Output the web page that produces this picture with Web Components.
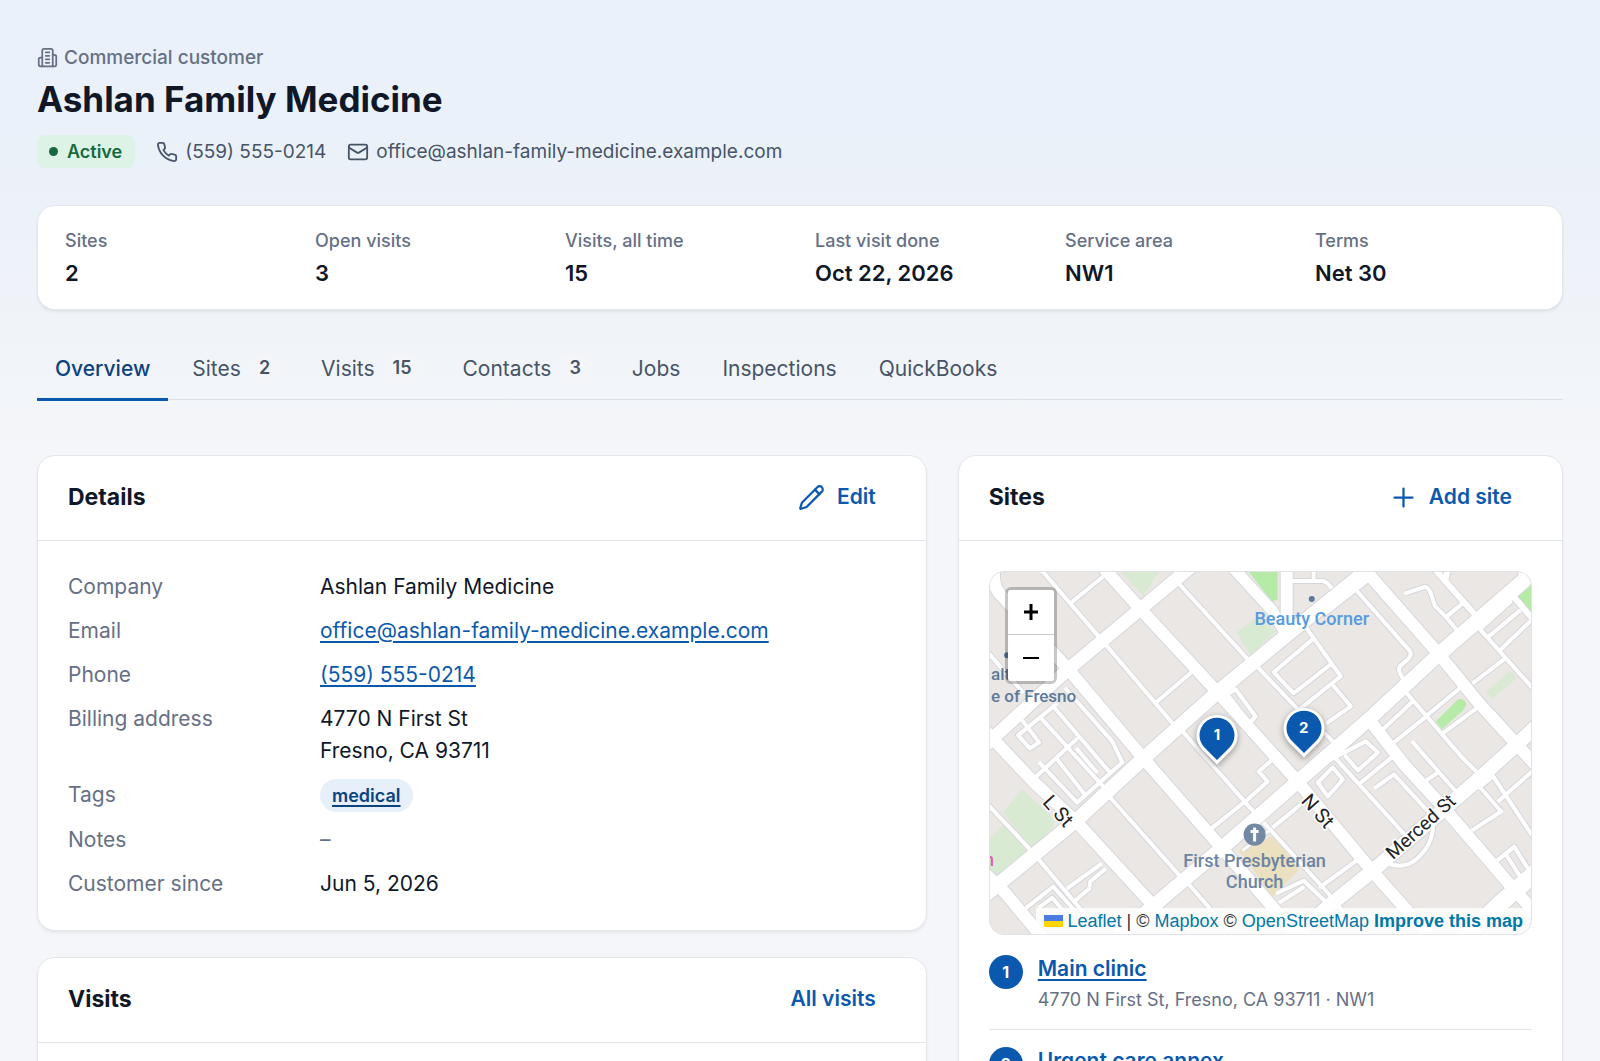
<!DOCTYPE html>
<html lang="en">
<head>
<meta charset="utf-8">
<title>Ashlan Family Medicine</title>
<style>
  html { scrollbar-width: none; }
  body {
    margin: 0;
    min-height: 100vh;
    font-family: Inter, "Liberation Sans", sans-serif;
    color: #101828;
    background: #f4f6f9 linear-gradient(#eaf1fb 0, #ebf1f9 160px, #f4f6f9 460px) no-repeat;
    --brand: #0b59ae;
    --brand-dark: #0b4380;
    --muted: #667085;
    --line: #e3e7ec;
  }
</style>
</head>
<body>
<customer-page></customer-page>

<script>
const ICONS = {
  building: '<path d="M6 22V4a2 2 0 0 1 2-2h8a2 2 0 0 1 2 2v18Z"/><path d="M6 12H4a2 2 0 0 0-2 2v6a2 2 0 0 0 2 2h2"/><path d="M18 9h2a2 2 0 0 1 2 2v9a2 2 0 0 1-2 2h-2"/><path d="M10 6h4M10 10h4M10 14h4M10 18h4"/>',
  phone: '<path d="M22 16.92v3a2 2 0 0 1-2.18 2 19.79 19.79 0 0 1-8.63-3.07 19.5 19.5 0 0 1-6-6 19.79 19.79 0 0 1-3.07-8.67A2 2 0 0 1 4.11 2h3a2 2 0 0 1 2 1.72 12.84 12.84 0 0 0 .7 2.81 2 2 0 0 1-.45 2.11L8.09 9.91a16 16 0 0 0 6 6l1.27-1.27a2 2 0 0 1 2.11-.45 12.84 12.84 0 0 0 2.81.7A2 2 0 0 1 22 16.92z"/>',
  mail: '<rect x="2" y="4" width="20" height="16" rx="2"/><path d="m22 7-8.97 5.7a1.94 1.94 0 0 1-2.06 0L2 7"/>',
  pencil: '<path d="M21.174 6.812a1 1 0 0 0-3.986-3.987L3.842 16.174a2 2 0 0 0-.5.83l-1.321 4.352a.5.5 0 0 0 .623.622l4.353-1.32a2 2 0 0 0 .83-.497z"/><path d="m15 5 4 4"/>',
  plus: '<path d="M4 12h16M12 4v16"/>'
};

function define(name, html, setup) {
  const template = document.createElement('template');
  template.innerHTML = html;
  customElements.define(name, class extends HTMLElement {
    constructor() {
      super();
      this.attachShadow({ mode: 'open' }).append(template.content.cloneNode(true));
    }
    connectedCallback() {
      if (setup && !this.ready) { this.ready = true; setup(this, this.shadowRoot); }
    }
  });
}

define('line-icon', `
  <style>
    :host { display: block; flex: none; width: 22px; height: 22px; }
    svg { display: block; width: 100%; height: 100%; fill: none; stroke: currentColor; stroke-width: 2; stroke-linecap: round; stroke-linejoin: round; }
  </style>
  <svg viewBox="0 0 24 24" aria-hidden="true"></svg>`,
  (el, root) => { root.querySelector('svg').innerHTML = ICONS[el.getAttribute('name')]; });

define('status-badge', `
  <style>
    :host { display: flex; align-items: center; gap: 9px; box-sizing: border-box; height: 33px; padding: 0 13px 0 12px; border-radius: 8px; background: #dcf3e5; color: #17693f; font-size: 18px; font-weight: 600; }
    i { width: 9px; height: 9px; border-radius: 50%; background: currentColor; }
  </style>
  <i></i><slot></slot>`);

define('customer-header', `
  <style>
    :host { display: block; }
    .kind { display: flex; align-items: center; gap: 6px; margin: 0; height: 30px; color: var(--muted); font-size: 19px; font-weight: 500; }
    .kind line-icon { width: 21px; height: 21px; }
    h1 { margin: 3px 0 12px; font-size: 35px; line-height: 48px; font-weight: 700; }
    .meta { display: flex; flex-wrap: wrap; align-items: center; gap: 21px; font-size: 19px; }
    .contact { display: flex; align-items: center; gap: 7px; color: #475467; text-decoration: none; }
  </style>
  <p class="kind"><line-icon name="building"></line-icon>Commercial customer</p>
  <h1>Ashlan Family Medicine</h1>
  <div class="meta">
    <status-badge>Active</status-badge>
    <a class="contact" href="tel:+15595550214"><line-icon name="phone"></line-icon>(559) 555-0214</a>
    <a class="contact" href="mailto:office@ashlan-family-medicine.example.com"><line-icon name="mail"></line-icon>office@ashlan-family-medicine.example.com</a>
  </div>`);

define('stat-item', `
  <style>
    :host { display: block; }
    .label { color: var(--muted); font-size: 18px; line-height: 28px; font-weight: 500; margin-bottom: 2px; }
    .value { font-size: 22px; line-height: 32px; font-weight: 600; }
  </style>
  <div class="label"></div><div class="value"><slot></slot></div>`,
  (el, root) => { root.querySelector('.label').textContent = el.getAttribute('label'); });

define('stat-strip', `
  <style>
    :host { display: grid; grid-template-columns: repeat(6, minmax(0, 1fr)); gap: 30px; padding: 21px 27px 20px; background: #fff; border: 1px solid var(--line); border-radius: 18px; box-shadow: 0 2px 3px rgba(16, 24, 40, .07); }
  </style>
  <slot></slot>`);

define('tab-link', `
  <style>
    :host { display: block; }
    a { display: flex; align-items: center; gap: 9px; height: 60px; padding: 0 18px; margin-bottom: -2px; border-bottom: 3px solid transparent; color: #475467; font-size: 21px; text-decoration: none; }
    :host([active]) a { color: var(--brand-dark); border-color: var(--brand); font-weight: 500; }
    b { padding: 0 9px; border-radius: 12px; font-size: 18px; line-height: 26px; font-weight: 600; background: #f3f5f9; }
    b:empty { display: none; }
  </style>
  <a href="#"><slot></slot><b></b></a>`,
  (el, root) => { root.querySelector('b').textContent = el.getAttribute('count') || ''; });

define('tab-bar', `
  <style>
    :host { display: flex; gap: 6px; border-bottom: 1px solid #dde1e7; }
  </style>
  <slot></slot>`);

define('text-action', `
  <style>
    :host { display: block; }
    button { display: flex; align-items: center; gap: 12px; padding: 0 20px; height: 48px; border: 0; border-radius: 9px; background: none; color: var(--brand); font: 600 21px/32px Inter, sans-serif; }
    line-icon { width: 27px; height: 27px; }
  </style>
  <button type="button"><slot></slot></button>`,
  (el, root) => {
    const name = el.getAttribute('icon');
    if (!name) return;
    const icon = document.createElement('line-icon');
    icon.setAttribute('name', name);
    root.querySelector('button').prepend(icon);
  });

define('panel-card', `
  <style>
    :host { display: block; background: #fff; border: 1px solid var(--line); border-radius: 18px; box-shadow: 0 2px 3px rgba(16, 24, 40, .06); }
    header { display: flex; align-items: center; justify-content: space-between; box-sizing: border-box; height: 85px; padding: 0 30px 2px; border-bottom: 1px solid var(--line); }
    h2 { margin: 0; font-size: 23px; line-height: 32px; font-weight: 700; }
    .body { padding: 30px; }
  </style>
  <header><h2></h2><slot name="action"></slot></header>
  <div class="body"><slot></slot></div>`,
  (el, root) => { root.querySelector('h2').textContent = el.getAttribute('heading'); });

define('tag-pill', `
  <style>
    :host { display: inline-flex; vertical-align: top; }
    a { padding: 0 12px; border-radius: 17px; background: #e6effa; color: var(--brand-dark); font-size: 18px; line-height: 33px; font-weight: 600; text-decoration-thickness: 2px; text-underline-offset: 3px; }
  </style>
  <a href="#"><slot></slot></a>`);

define('detail-list', `
  <style>
    :host { display: block; font-size: 21px; line-height: 32px; }
    dl { display: grid; grid-template-columns: 240px minmax(0, 1fr); gap: 12px; margin: 0; }
    dt { color: var(--muted); }
    dd { margin: 0; }
    dd > a { color: var(--brand); text-underline-offset: 3px; }
    .none { color: var(--muted); }
  </style>
  <dl>
    <dt>Company</dt><dd>Ashlan Family Medicine</dd>
    <dt>Email</dt><dd><a href="mailto:office@ashlan-family-medicine.example.com">office@ashlan-family-medicine.example.com</a></dd>
    <dt>Phone</dt><dd><a href="tel:+15595550214">(559) 555-0214</a></dd>
    <dt>Billing address</dt><dd>4770 N First St<br>Fresno, CA 93711</dd>
    <dt>Tags</dt><dd><tag-pill>medical</tag-pill></dd>
    <dt>Notes</dt><dd class="none">–</dd>
    <dt>Customer since</dt><dd>Jun 5, 2026</dd>
  </dl>`);

define('map-pin', `
  <style>
    :host { display: block; position: absolute; width: 42px; height: 42px; margin: -21px 0 0 -21px; }
    svg { position: absolute; inset: 0; width: 42px; height: 51px; overflow: visible; filter: drop-shadow(0 2px 3px rgba(0, 0, 0, .35)); }
    span { position: relative; display: block; text-align: center; color: #fff; font-size: 15px; line-height: 41px; font-weight: 700; }
  </style>
  <svg viewBox="0 0 42 51" aria-hidden="true"><path d="M6 35.5A20.5 20.5 0 1 1 36 35.5L21 50.5Z" fill="#fff"/><path d="M8.5 33.5A17.5 17.5 0 1 1 33.5 33.5L21 46Z" fill="#0b59ae"/></svg>
  <span><slot></slot></span>`);

/* Street network in map canvas units; each entry is [stroke width, path data]. */
const STREETS = [
  [13, 'M1195 564L1140 610 1068 670 985 746'],
  [14, 'M1375 564L1280 641 1217 693 1143 759 1077 820 1000 883 980 900'],
  [14, 'M1438 655L1368 720 1297 782 1223 847 1153 906 1120 934'],
  [15, 'M1438 655L1521 583 Q1529 577 1522 566'],
  [14, 'M1540 722L1518 743 1477 780 1373 870 1327 907 1295 936'],
  [17, 'M1540 868L1500 903 1465 936'],
  [12, 'M994 566V578Q994 590 1002 597L1068 670 1143 759 1220 847 1290 928'],
  [12, 'M1099 564L1140 610 1217 693 1297 782 1370 870 1425 932'],
  [11, 'M1230 566L1272 612 1284 633'],
  [12, 'M1286 566V634'],
  [12, 'M1358 564L1438 655 1477 703 1520 750 1540 772'],
  [12, 'M1368 720L1403 765 1447 813 1513 890 1545 925'],
  [12, 'M984 730L1033 782 1077 823 1153 906 1175 934'],
  [12, 'M984 873L1005 893 1040 935'],
  [6, 'M1430 566L1475 617M1448 566L1444 582'],
  [6, 'M1510 595L1535 624'],
  [4, 'M1043 573L1105 645 1173 725M1073 602L1106 575'],
  [4, 'M1177 583L1247 660M1157 702L1190 674'],
  [4, 'M1257 668L1300 713M1227 695L1235 690 1255 717 1249 724 1228 697'],
  [4, 'M1183 733L1253 812M1212 828L1247 800 1267 782 1258 772 1272 760'],
  [4, 'M985 650L1022 692M1023 722L1039 743 1030 749 1018 736 1056 705'],
  [4, 'M1042 720L1103 787M1053 707L1108 771M1066 690L1112 742 1122 763 1077 803 1040 764'],
  [4, 'M1036 777L1076 740M1057 760L1083 793M1077 750L1096 772'],
  [4, 'M1110 798L1180 877M1187 883L1228 930'],
  [4, 'M985 802L1032 852 1085 915'],
  [4, 'M1068 888L1100 865M1076 900L1089 889 1090 882 1104 870M1025 909L1053 887 1073 909M1040 907L1052 898 1064 912'],
  [3, 'M1243 850L1270 830M1262 818L1245 832'],
  [4, 'M1293 582H1322Q1327 583 1330 588M1313 572V582'],
  [4, 'M1325 614L1366 582M1357 593L1409 652Q1411 656 1407 660L1399 667Q1396 671 1402 679'],
  [4, 'M1305 628L1340 677 1295 713M1312 640L1273 673 1293 694 1330 665'],
  [4, 'M1333 687L1350 707 1327 723M1320 730L1334 744'],
  [4, 'M1405 594L1423 588Q1427 587 1430 595L1434 607 1445 618 1459 635M1445 618L1463 603'],
  [4, 'M1477 628L1535 693M1473 683L1503 660M1488 637L1518 612M1500 650L1528 623'],
  [4, 'M1481 628L1509 603M1405 693L1460 757 1474 771M1425 717L1460 688M1443 733L1478 707'],
  [4, 'M1383 729L1412 702M1393 743L1423 719M1412 743L1453 790M1427 780L1437 773'],
  [4, 'M1330 760L1365 742 1377 753 1357 771 1345 757M1317 783L1332 768 1342 780 1327 797Z'],
  [4, 'M1333 757L1402 833M1360 783L1392 757M1375 788L1393 775 1430 815'],
  [4, 'M1432 826Q1432 845 1415 860 1401 871 1383 862'],
  [4, 'M1273 827L1300 805M1264 824L1327 893 1345 915M1320 887L1357 860M1277 893L1303 881 1330 907M1280 902L1302 888'],
  [4, 'M1472 830L1500 812M1498 801L1532 771M1478 788L1492 777 1535 842M1480 789L1500 812'],
  [4, 'M1497 860L1513 847 1528 871 1519 877 1505 855']
];

define('site-map', `
  <style>
    :host { display: block; position: relative; aspect-ratio: 542 / 363; overflow: hidden; box-sizing: border-box; border: 1px solid #dfe3e8; border-radius: 15px; background: #eae7e4; }
    .canvas { display: block; width: 100%; height: 100%; font-family: Roboto, sans-serif; font-size: 18px; font-weight: 500; }
    .halo { paint-order: stroke; stroke: #fff; stroke-width: 3px; stroke-linejoin: round; }
    .zoom { position: absolute; left: 15px; top: 15px; border: 3px solid rgba(0, 0, 0, .22); border-radius: 6px; background-clip: padding-box; }
    .zoom button { display: block; width: 46px; height: 46px; padding: 0; border: 0; background: #fff; color: #000; }
    .zoom button:first-child { height: 45px; border-bottom: 1px solid #ccc; box-sizing: border-box; border-radius: 3px 3px 0 0; }
    .zoom button:last-child { border-radius: 0 0 3px 3px; }
    .zoom svg { display: block; margin: auto; }
    .credit { position: absolute; right: 0; bottom: 0; display: flex; align-items: center; gap: 5px; height: 26px; padding: 0 8px; background: rgba(255, 255, 255, .82); color: #333; font: 18px/26px "Liberation Sans", sans-serif; white-space: pre; }
    .credit a { color: #0078a8; text-decoration: none; }
    .one { left: 42%; top: 45%; }
    .two { left: 58%; top: 43%; }
  </style>
  <svg class="canvas" viewBox="990 573 540 361" preserveAspectRatio="xMidYMid slice" aria-label="Map of sites">
    <g fill="#d9ead3">
      <path d="M1118 570H1160L1143 597Z"/><path d="M1236 633L1257 618 1275 632 1250 656Z"/>
      <path d="M1022 790L1003 813 1032 850 1054 826 1052 818Z"/><path d="M1003 825L1028 850 997 876 985 870V845Z"/>
      <path d="M1485 693L1508 672Q1516 676 1514 680L1491 700Z"/>
    </g>
    <g fill="#b5eba6">
      <path d="M1246 570H1277V601L1271 602Z"/><path d="M1535 580L1516 597 1535 618Z"/>
      <path d="M1435 722L1457 700Q1464 698 1465 706L1462 711 1441 730Z"/>
    </g>
    <path fill="#ebe0c0" d="M1238 850L1274 836 1298 870 1272 897Z"/>
    <g class="casing" fill="none" stroke="#d6d7dd" stroke-linejoin="round"></g>
    <g class="surface" fill="none" stroke="#fff" stroke-linejoin="round" stroke-linecap="round"></g>
    <g fill="#5b7a9b">
      <circle cx="1007" cy="656" r="3"/><circle cx="1311" cy="600" r="3"/>
      <text x="991" y="681" font-size="17">alth</text><text x="991" y="703" font-size="17">e of Fresno</text>
    </g>
    <text x="1311" y="626" text-anchor="middle" fill="#579be0">Beauty Corner</text>
    <text x="984" y="866" fill="#d75fb4">n</text>
    <g fill="#222" font-weight="400" font-size="20" text-anchor="middle">
      <text class="halo" transform="translate(1053 816) rotate(48)">L St</text>
      <text class="halo" transform="translate(1312 816) rotate(48)">N St</text>
      <text class="halo" transform="translate(1424 832) rotate(-42)" font-size="19">Merced St</text>
    </g>
    <circle cx="1254" cy="835" r="11" fill="#7389a3"/>
    <path d="M1254 828V842M1250 832H1258" stroke="#fff" stroke-width="3"/>
    <g fill="#6b84a3" text-anchor="middle"><text x="1254" y="867">First Presbyterian</text><text x="1254" y="888">Church</text></g>
  </svg>
  <map-pin class="one">1</map-pin>
  <map-pin class="two">2</map-pin>
  <div class="zoom">
    <button type="button" aria-label="Zoom in"><svg width="16" height="18" viewBox="0 0 16 18"><path d="M1 9H15M8 1V17" stroke="#000" stroke-width="3"/></svg></button>
    <button type="button" aria-label="Zoom out"><svg width="16" height="18" viewBox="0 0 16 18"><path d="M0 9H16" stroke="#000" stroke-width="2"/></svg></button>
  </div>
  <div class="credit"><svg width="19" height="12" viewBox="0 0 19 12" aria-hidden="true"><path fill="#4c7be1" d="M0 0h19v6H0z"/><path fill="#ffd500" d="M0 6h19v6H0z"/></svg><span><a href="#">Leaflet</a> | © <a href="#">Mapbox</a> © <a href="#">OpenStreetMap</a> <a href="#"><b>Improve this map</b></a></span></div>`,
  (el, root) => {
    root.querySelector('.casing').innerHTML = STREETS.map(([w, d]) => `<path d="${d}" stroke-width="${w + 2}"/>`).join('');
    root.querySelector('.surface').innerHTML = STREETS.map(([w, d]) => `<path d="${d}" stroke-width="${w}"/>`).join('');
  });

define('site-item', `
  <style>
    :host { display: flex; gap: 15px; padding: 15px 0 14px; }
    :host(:not(:last-child)) { border-bottom: 1px solid var(--line); }
    .number { flex: none; width: 34px; height: 34px; margin-top: 2px; border-radius: 50%; background: var(--brand); color: #fff; font-size: 16px; line-height: 34px; font-weight: 700; text-align: center; }
    a { display: block; width: fit-content; color: var(--brand); font-size: 21px; line-height: 32px; font-weight: 600; text-underline-offset: 3px; text-decoration-thickness: 2px; }
    .address { color: var(--muted); font-size: 18px; line-height: 30px; }
  </style>
  <div class="number"></div>
  <div><a href="#"></a><div class="address"><slot></slot></div></div>`,
  (el, root) => {
    root.querySelector('.number').textContent = el.getAttribute('number');
    root.querySelector('a').textContent = el.getAttribute('name');
  });

define('customer-page', `
  <style>
    :host { display: block; padding: 42px 37px 0; }
    stat-strip { margin-top: 37px; }
    tab-bar { margin-top: 28px; }
    main { display: grid; grid-template-columns: minmax(0, 147fr) minmax(0, 100fr); gap: 31px; align-items: start; margin-top: 55px; }
    .column { display: grid; gap: 26px; }
    .sites { margin-top: 3px; }
  </style>
  <customer-header></customer-header>
  <stat-strip>
    <stat-item label="Sites">2</stat-item>
    <stat-item label="Open visits">3</stat-item>
    <stat-item label="Visits, all time">15</stat-item>
    <stat-item label="Last visit done">Oct 22, 2026</stat-item>
    <stat-item label="Service area">NW1</stat-item>
    <stat-item label="Terms">Net 30</stat-item>
  </stat-strip>
  <tab-bar>
    <tab-link active>Overview</tab-link>
    <tab-link count="2">Sites</tab-link>
    <tab-link count="15">Visits</tab-link>
    <tab-link count="3">Contacts</tab-link>
    <tab-link>Jobs</tab-link>
    <tab-link>Inspections</tab-link>
    <tab-link>QuickBooks</tab-link>
  </tab-bar>
  <main>
    <div class="column">
      <panel-card heading="Details">
        <text-action slot="action" icon="pencil">Edit</text-action>
        <detail-list></detail-list>
      </panel-card>
      <panel-card heading="Visits">
        <text-action slot="action">All visits</text-action>
      </panel-card>
    </div>
    <panel-card heading="Sites">
      <text-action slot="action" icon="plus">Add site</text-action>
      <site-map></site-map>
      <div class="sites">
        <site-item number="1" name="Main clinic">4770 N First St, Fresno, CA 93711 · NW1</site-item>
        <site-item number="2" name="Urgent care annex"></site-item>
      </div>
    </panel-card>
  </main>`);
</script>
</body>
</html>
